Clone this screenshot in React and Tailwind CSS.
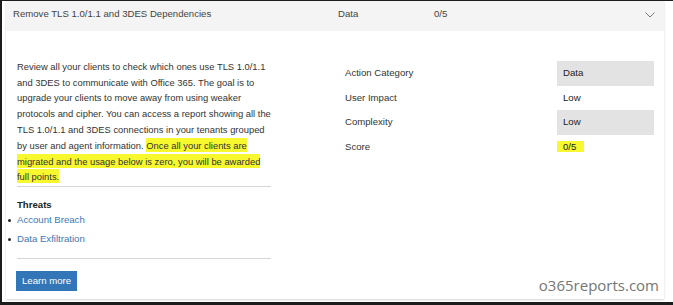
import React from 'react';

const rows = [
    { label: 'Action Category', value: 'Data', shaded: true },
    { label: 'User Impact', value: 'Low' },
    { label: 'Complexity', value: 'Low', shaded: true },
    { label: 'Score', value: '0/5', score: true },
];

const threats = ['Account Breach', 'Data Exfiltration'];

const Chevron = () => (
    <svg width="10" height="6" viewBox="0 0 10 6" fill="none" className="text-[#777]">
        <path d="M0.5 0.5 L5 5 L9.5 0.5" stroke="currentColor" strokeWidth="1" />
    </svg>
);

export default function App() {
    return (
        <div className="relative w-[673px] h-[305px] bg-white border-l-2 border-t border-b-[3px] border-[#1c1c1c] pl-[4px] font-['Liberation_Sans',Arial,sans-serif] text-[9.6px] text-[#333] overflow-hidden">
            <div className="w-[658px] h-[298px] bg-white shadow-[0_1px_2px_rgba(0,0,0,0.18)] flex flex-col">
                {/* header strip */}
                <div className="h-[30px] bg-[#f4f4f4] flex items-start pt-[6px] pl-[7px] text-[#444]">
                    <span className="w-[325px]">Remove TLS 1.0/1.1 and 3DES Dependencies</span>
                    <span className="w-[96px]">Data</span>
                    <span className="flex-1">0/5</span>
                    <span className="mr-[9px] mt-[5px]"><Chevron /></span>
                </div>

                <div className="flex pt-[28px]">
                    {/* left column */}
                    <div className="w-[328px] pl-[11px] flex flex-col">
                        <p className="leading-[15.7px] w-[262px] whitespace-nowrap text-[9.4px]">
                            Review all your clients to check which ones use TLS 1.0/1.1<br />
                            and 3DES to communicate with Office 365. The goal is to<br />
                            upgrade your clients to move away from using weaker<br />
                            protocols and cipher. You can access a report showing all the<br />
                            TLS 1.0/1.1 and 3DES connections in your tenants grouped<br />
                            by user and agent information.{' '}
                            <span className="bg-[#f8f82e] py-[1.5px] box-decoration-clone">
                                Once all your clients are<br />
                                migrated and the usage below is zero, you will be awarded<br />
                                full points.
                            </span>
                        </p>
                        <div className="mt-[1.5px] w-[254px] h-px bg-[#d6d6d6]" />
                        <div className="mt-[10px] font-bold text-[#222] leading-[15px]">Threats</div>
                        <ul className="-mt-px">
                            {threats.map((t) => (
                                <li key={t} className="h-[19px] flex items-center -ml-[9px] gap-[6px]">
                                    <span className="w-[3px] h-[3px] rounded-full bg-[#222]" />
                                    <span className="text-[#3b78ba]">{t}</span>
                                </li>
                            ))}
                        </ul>
                        <div className="mt-[9px] w-[254px] h-px bg-[#d6d6d6]" />
                        <button className="mt-[12px] -ml-px w-[61px] h-[20px] bg-[#3276b8] text-white text-[9.6px] flex items-center justify-center">
                            Learn more
                        </button>
                    </div>

                    {/* right column */}
                    <div className="mt-[2px] ml-[11px] flex flex-col">
                        {rows.map((r) => (
                            <div key={r.label} className="h-[24.5px] flex items-center">
                                <span className="w-[212px]">{r.label}</span>
                                <span
                                    className={`w-[97px] h-full flex items-center ${r.shaded ? 'bg-[#e3e3e3]' : ''} ${r.score ? '' : 'pl-[6px]'} text-[#222]`}
                                >
                                    {r.score ? (
                                        <span className="bg-[#f8f82e] pl-[6px] pr-[8px] leading-[11px]">{r.value}</span>
                                    ) : (
                                        r.value
                                    )}
                                </span>
                            </div>
                        ))}
                    </div>
                </div>
            </div>

            {/* watermark */}
            <div className="absolute right-[14px] top-[273px] font-['Open_Sans',sans-serif] text-[15px] text-[#767676]">
                o365reports.com
            </div>
        </div>
    );
}
